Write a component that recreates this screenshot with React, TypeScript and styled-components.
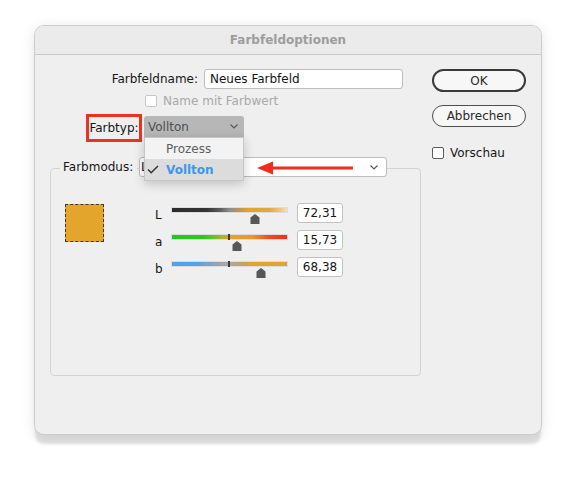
import React from "react";
import styled, { createGlobalStyle } from "styled-components";

const GlobalStyle = createGlobalStyle`
  html, body { margin: 0; padding: 0; background: #ffffff; }
  body {
    font-family: "DejaVu Sans", Verdana, sans-serif;
    font-size: 12px;
    color: #1a1a1a;
  }
  * { box-sizing: border-box; }
`;

const Page = styled.div`
  width: 575px;
  height: 478px;
  padding: 25px 0 0 34px;
`;

const Dialog = styled.div`
  width: 508px;
  height: 410px;
  border: 1px solid #cdcdcd;
  border-radius: 10px;
  background: #efefef;
  box-shadow: 0 10px 3px -1px rgba(0, 0, 0, 0.12), 0 2px 14px rgba(0, 0, 0, 0.1);
  display: flex;
  flex-direction: column;
`;

const TitleBar = styled.div`
  height: 29px;
  flex: none;
  border-bottom: 1px solid #c9c9c9;
  border-radius: 9px 9px 0 0;
  background: #ebebeb;
  display: flex;
  align-items: center;
  justify-content: center;
  font-weight: bold;
  color: #9d9d9d;
  font-size: 12px;
`;

const Body = styled.div`
  display: flex;
  gap: 11px;
  padding: 14px 15px 0 15px;
`;

const LeftCol = styled.div`
  width: 371px;
  display: flex;
  flex-direction: column;
`;

const RightCol = styled.div`
  width: 94px;
  display: flex;
  flex-direction: column;
`;

const NameRow = styled.div`
  display: flex;
  align-items: center;
  gap: 6px;
  height: 20px;
`;

const FieldLabel = styled.span`
  width: 148px;
  text-align: right;
  white-space: nowrap;
  color: #161616;
`;

const TextInput = styled.input`
  width: 199px;
  height: 20px;
  border: 1px solid #bcbcbc;
  border-radius: 3px;
  background: #ffffff;
  padding: 0 5px;
  font: inherit;
  color: #141414;
  outline: none;
`;

const CheckRow = styled.div<{ $indent: number; $top: number }>`
  display: flex;
  align-items: center;
  height: 20px;
  margin-left: ${(p) => p.$indent}px;
  margin-top: ${(p) => p.$top}px;
`;

const CheckBox = styled.span<{ $disabled?: boolean }>`
  width: 12px;
  height: 12px;
  flex: none;
  border: 1px solid ${(p) => (p.$disabled ? "#c6c6c6" : "#5c5c5c")};
  border-radius: 2px;
  background: #ffffff;
`;

const CheckLabel = styled.span<{ $disabled?: boolean }>`
  margin-left: 6px;
  white-space: nowrap;
  color: ${(p) => (p.$disabled ? "#a9a9a9" : "#161616")};
`;

const TypeRow = styled.div`
  display: flex;
  align-items: flex-start;
  margin-top: 3px;
  margin-left: 36px;
`;

const RedMark = styled.span`
  width: 56px;
  height: 28px;
  border: 3px solid #ec3322;
  display: flex;
  align-items: center;
  justify-content: center;
  white-space: nowrap;
  color: #161616;
`;

const TypeSelect = styled.div`
  position: relative;
  margin: 2px 0 0 2px;
  width: 100px;
  height: 21px;
  background: #b7b7b7;
  border-radius: 3px 3px 0 0;
  color: #4e4e4e;
  display: flex;
  align-items: center;
  justify-content: space-between;
  padding: 0 6px 0 4px;
`;

const Menu = styled.div`
  position: absolute;
  top: 100%;
  left: 0;
  width: 100px;
  background: #f3f3f3;
  border: 1px solid #c6c6c6;
  box-shadow: 0 3px 10px rgba(0, 0, 0, 0.2);
  z-index: 10;
`;

const MenuItem = styled.div<{ $active?: boolean }>`
  height: 21px;
  display: flex;
  align-items: center;
  background: ${(p) => (p.$active ? "#dcdcdc" : "transparent")};
  color: ${(p) => (p.$active ? "#3b97ec" : "#5e5e5e")};
  font-weight: ${(p) => (p.$active ? "bold" : "normal")};
`;

const MenuCheck = styled.span`
  width: 21px;
  flex: none;
  display: flex;
  align-items: center;
  padding-left: 2px;
`;

const Group = styled.div`
  margin-top: 26px;
  height: 208px;
  border: 1px solid #d4d4d4;
  border-radius: 4px;
`;

const Legend = styled.div`
  display: flex;
  align-items: center;
  height: 20px;
  margin: -12px 0 0 9px;
`;

const LegendLabel = styled.span`
  width: 77px;
  padding: 0 3px;
  background: #efefef;
  white-space: nowrap;
  color: #161616;
`;

const ModeSelect = styled.div`
  position: relative;
  margin-left: 2px;
  width: 248px;
  height: 20px;
  background: #ffffff;
  border: 1px solid #bdbdbd;
  border-radius: 3px;
  display: flex;
  align-items: center;
  justify-content: space-between;
  padding: 0 8px 0 1px;
  color: #161616;
`;

const RedArrow = styled.svg`
  position: absolute;
  left: 117px;
  top: 2px;
`;

const ColorArea = styled.div`
  display: flex;
  align-items: flex-start;
  margin-top: 26px;
  padding-left: 14px;
`;

const Swatch = styled.div<{ $color: string }>`
  width: 39px;
  height: 38px;
  margin-top: 1px;
  background: ${(p) => p.$color};
  border: 1px dashed #3a3a3a;
`;

const SliderGrid = styled.div`
  margin-left: 48px;
  display: grid;
  grid-template-columns: 20px 125px 46px;
  row-gap: 7px;
  align-items: start;
`;

const ChannelLabel = styled.span`
  height: 20px;
  padding: 5px 0 0 3px;
  color: #161616;
`;

const SliderCell = styled.div`
  position: relative;
  height: 20px;
`;

const Track = styled.div<{ $gradient: string; $tick?: boolean }>`
  position: relative;
  margin-top: 5px;
  width: 115px;
  height: 4px;
  background: ${(p) => p.$gradient};
  box-shadow: 0 0 0 1px #dcdcdc;
  &::after {
    content: "";
    display: ${(p) => (p.$tick ? "block" : "none")};
    position: absolute;
    left: 56px;
    top: -1px;
    width: 2px;
    height: 6px;
    background: #3a3a3a;
  }
`;

const Thumb = styled.svg`
  position: absolute;
  top: 11px;
`;

const NumberBox = styled.div`
  width: 46px;
  height: 20px;
  background: #ffffff;
  border: 1px solid #c2c2c2;
  border-radius: 3px;
  display: flex;
  align-items: center;
  justify-content: center;
  color: #161616;
`;

const Button = styled.div<{ $primary?: boolean; $top: number; $height: number }>`
  margin-top: ${(p) => p.$top}px;
  height: ${(p) => p.$height}px;
  border: ${(p) => (p.$primary ? "2px solid #3a3a3a" : "1px solid #4e4e4e")};
  border-radius: 12px;
  background: #f7f7f7;
  display: flex;
  align-items: center;
  justify-content: center;
  color: #2a2a2a;
`;

const Chevron = () => (
  <svg width="8" height="5" viewBox="0 0 8 5">
    <polyline points="0.5,0.5 4,4 7.5,0.5" fill="none" stroke="#555" strokeWidth="1.1" />
  </svg>
);

const channels = [
  {
    name: "L",
    value: "72,31",
    pos: 72.31 / 100,
    tick: false,
    gradient:
      "linear-gradient(90deg, #2b2b2b 0%, #333 30%, #5e5e5e 42%, #8c8c8c 50%, #b8955a 58%, #e2a42b 66%, #e4a83a 85%, #eccb86 95%, #f2e2bf 100%)",
  },
  {
    name: "a",
    value: "15,73",
    pos: (15.73 + 128) / 255,
    tick: true,
    gradient:
      "linear-gradient(90deg, #1fc81f 0%, #2acb1a 28%, #9cb62a 42%, #e2a42b 52%, #e69a2a 70%, #f04a20 84%, #ff2a1a 100%)",
  },
  {
    name: "b",
    value: "68,38",
    pos: (68.38 + 128) / 255,
    tick: true,
    gradient:
      "linear-gradient(90deg, #4aa3f0 0%, #55a3ea 22%, #98a4b2 40%, #a9a9a9 50%, #bfa070 60%, #e2a42b 70%, #e2a42b 100%)",
  },
];

export default function App() {
  return (
    <>
      <GlobalStyle />
      <Page>
        <Dialog>
          <TitleBar>Farbfeldoptionen</TitleBar>
          <Body>
            <LeftCol>
              <NameRow>
                <FieldLabel>Farbfeldname:</FieldLabel>
                <TextInput readOnly value="Neues Farbfeld" />
              </NameRow>
              <CheckRow $indent={95} $top={2}>
                <CheckBox $disabled />
                <CheckLabel $disabled>Name mit Farbwert</CheckLabel>
              </CheckRow>
              <TypeRow>
                <RedMark>Farbtyp:</RedMark>
                <TypeSelect>
                  <span>Vollton</span>
                  <Chevron />
                  <Menu>
                    <MenuItem>
                      <MenuCheck />
                      Prozess
                    </MenuItem>
                    <MenuItem $active>
                      <MenuCheck>
                        <svg width="12" height="9" viewBox="0 0 12 9">
                          <polyline points="1,4.5 4.2,7.8 11,1" fill="none" stroke="#333" strokeWidth="1.5" />
                        </svg>
                      </MenuCheck>
                      Vollton
                    </MenuItem>
                  </Menu>
                </TypeSelect>
              </TypeRow>
              <Group>
                <Legend>
                  <LegendLabel>Farbmodus:</LegendLabel>
                  <ModeSelect>
                    <span>Lab</span>
                    <Chevron />
                    <RedArrow width="97" height="16" viewBox="0 0 97 16">
                      <polygon points="0,8 16,1.5 16,14.5" fill="#ee2d1c" />
                      <rect x="15" y="6.5" width="81" height="3" fill="#ee2d1c" />
                    </RedArrow>
                  </ModeSelect>
                </Legend>
                <ColorArea>
                  <Swatch $color="#e3a52b" />
                  <SliderGrid>
                    {channels.map((c) => (
                      <React.Fragment key={c.name}>
                        <ChannelLabel>{c.name}</ChannelLabel>
                        <SliderCell>
                          <Track $gradient={c.gradient} $tick={c.tick} />
                          <Thumb
                            width="10"
                            height="10"
                            viewBox="0 0 10 10"
                            style={{ left: `${Math.round(c.pos * 115 - 5)}px` }}
                          >
                            <polygon points="5,0 9.5,3.5 9.5,10 0.5,10 0.5,3.5" fill="#575757" />
                          </Thumb>
                        </SliderCell>
                        <NumberBox>{c.value}</NumberBox>
                      </React.Fragment>
                    ))}
                  </SliderGrid>
                </ColorArea>
              </Group>
            </LeftCol>
            <RightCol>
              <Button $primary $top={0} $height={23}>
                OK
              </Button>
              <Button $top={13} $height={22}>
                Abbrechen
              </Button>
              <CheckRow $indent={0} $top={16}>
                <CheckBox />
                <CheckLabel>Vorschau</CheckLabel>
              </CheckRow>
            </RightCol>
          </Body>
        </Dialog>
      </Page>
    </>
  );
}
